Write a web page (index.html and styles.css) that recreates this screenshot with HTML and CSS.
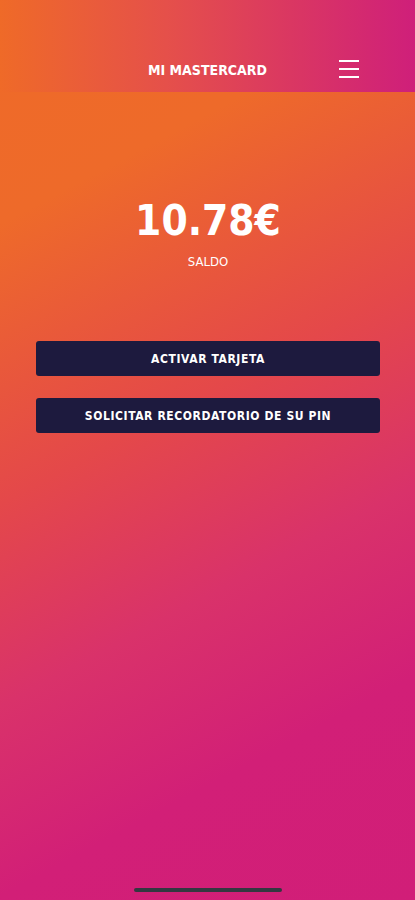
FILE: index.html
```html
<!DOCTYPE html>
<html lang="es">
  <head>
    <meta charset="UTF-8" />
    <meta name="viewport" content="width=device-width, initial-scale=1.0" />
    <title>Mi Mastercard</title>
    <link rel="stylesheet" href="styles.css">
  </head>
  <body>
    <div class="screen">
      <header class="topbar">
        <h1 class="title">MI MASTERCARD</h1>
        <button class="menu" aria-label="Menú">
          <svg width="20" height="20" viewBox="0 0 20 20">
            <path d="M0 2h20M0 10h20M0 18h20" stroke="#fff" stroke-width="2" />
          </svg>
        </button>
      </header>
      <main class="content">
        <div class="balance">
          <div class="amount">10.78€</div>
          <div class="label">SALDO</div>
        </div>
        <div class="actions">
          <button class="action">ACTIVAR TARJETA</button>
          <button class="action">SOLICITAR RECORDATORIO DE SU PIN</button>
        </div>
      </main>
      <div class="home-bar"></div>
    </div>
  </body>
</html>
```

FILE: styles.css
```css
body {
  margin: 0;
  font-family: "DejaVu Sans Condensed", "DejaVu Sans", sans-serif;
  color: #fff;
}
.screen {
  height: 900px;
  display: flex;
  flex-direction: column;
  background: linear-gradient(152deg, #ef6a28 0%, #ee6a2a 20%, #e4484a 45%, #d9326a 63%, #d21f77 80%, #d11e78 100%);
}
.topbar {
  height: 92px;
  box-sizing: border-box;
  padding-top: 56px;
  display: flex;
  justify-content: center;
  position: relative;
  background: linear-gradient(90deg, #ef6a28 0%, #e5504a 40%, #da3762 70%, #cf1f7a 100%);
}
.title {
  margin: 0;
  font-size: 14px;
  font-weight: bold;
  line-height: 28px;
}
.menu {
  position: absolute;
  left: 339px;
  top: 59px;
  padding: 0;
  border: none;
  background: none;
  width: 20px;
  height: 20px;
}
.menu svg {
  display: block;
}
.content {
  flex: 1;
  padding: 0 35px 0 36px;
}
.balance {
  padding-top: 104px;
  text-align: center;
}
.amount {
  font-size: 42px;
  font-weight: bold;
  line-height: 50px;
}
.label {
  margin-top: 8px;
  font-size: 13px;
  line-height: 16px;
}
.actions {
  margin-top: 71px;
  display: flex;
  flex-direction: column;
  gap: 22px;
}
.action {
  height: 35px;
  border: none;
  border-radius: 3px;
  background: #1d1a3e;
  color: #fff;
  font-family: inherit;
  font-size: 12px;
  font-weight: bold;
  letter-spacing: 0.6px;
}
.home-bar {
  align-self: center;
  width: 148px;
  height: 4px;
  border-radius: 2px;
  background: #333840;
  margin-bottom: 8px;
}
```
